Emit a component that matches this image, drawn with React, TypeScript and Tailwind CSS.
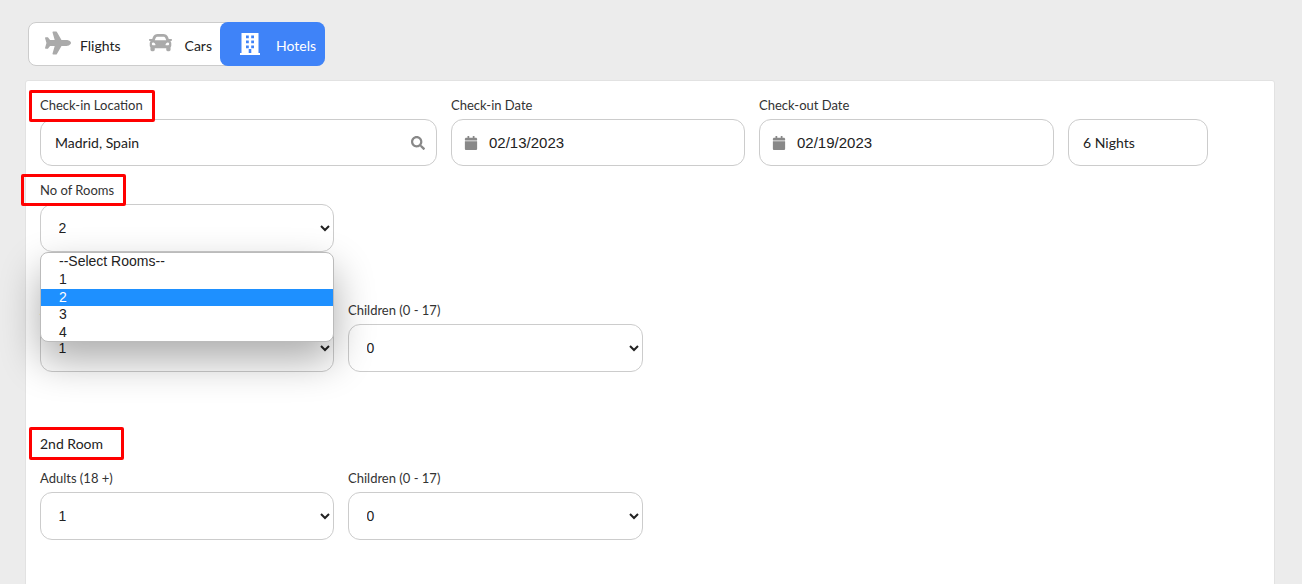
import { FaCalendar, FaCar, FaPlane, FaSearch } from "react-icons/fa";

const boxClass = "h-[47px] rounded-[12px] border border-[#ccc] bg-white flex items-center";

function Label({ children, lower }: { children: React.ReactNode; lower?: boolean }) {
  return (
    <p className={"text-[13px] leading-[19px] text-[#333] " + (lower ? "h-[24px] pt-[1px]" : "h-[23px]")}>{children}</p>
  );
}

function SelectField({ label, value, options, width }: { label: string; value: string; options: string[]; width: string }) {
  return (
    <div className={width}>
      <Label lower>{label}</Label>
      <select
        defaultValue={value}
        className="w-full h-[48px] rounded-[12px] border border-[#ccc] bg-white pl-[13.5px] pr-[4px] text-[14px] text-[#222] font-['Liberation_Sans',sans-serif]"
      >
        {options.map((o) => (
          <option key={o}>{o}</option>
        ))}
      </select>
    </div>
  );
}

function DateField({ label, value, width }: { label: string; value: string; width: string }) {
  return (
    <div className={width}>
      <Label>{label}</Label>
      <div className={boxClass + " pl-[12px] gap-[11px]"}>
        <FaCalendar size={14} className="text-[#888]" />
        <span className="pt-[2px] text-[15px] text-[#222] font-['Liberation_Sans',sans-serif]">{value}</span>
      </div>
    </div>
  );
}

function RoomRow() {
  return (
    <div className="flex gap-[14px]">
      <SelectField label="Adults (18 +)" value="1" options={["1", "2", "3", "4"]} width="w-[294px]" />
      <SelectField label="Children (0 - 17)" value="0" options={["0", "1", "2", "3"]} width="w-[295px]" />
    </div>
  );
}

function RedBox({ className }: { className: string }) {
  return <div className={"absolute border-[3px] border-[#f00] rounded-[2px] pointer-events-none " + className} />;
}

function HotelIcon() {
  return (
    <svg width="20" height="22" viewBox="0 0 20 22" fill="currentColor">
      <path
        fillRule="evenodd"
        d="M1.5 0h17v20h1.5v2H0v-2h1.5zM6 2.5v2.7h2.8V2.5zM11.2 2.5v2.7H14V2.5zM6 7.5v2.7h2.8V7.5zM11.2 7.5v2.7H14V7.5zM6 12.5v2.7h2.8v-2.7zM11.2 12.5v2.7H14v-2.7zM8.7 16v4h2.6v-4z"
      />
    </svg>
  );
}

const roomOptions = ["--Select Rooms--", "1", "2", "3", "4"];

export default function App() {
  return (
    <div className="h-[584px] overflow-hidden bg-[#ececec] font-['Lato',sans-serif]">
      <div className="pt-[22px] pl-[28px]">
        <div className="inline-flex h-[44px] rounded-[8px] border border-[#ccc] bg-white text-[14px] text-[#222]">
          <div className="flex items-center gap-[9px] pl-[16px] pr-[12px]">
            <FaPlane size={26} className="text-[#aaa] -mt-[3px]" />
            <span className="pt-[2px]">Flights</span>
          </div>
          <div className="flex items-center gap-[13px] pl-[16px] pr-[8px]">
            <FaCar size={23} className="text-[#aaa] -mt-[4px]" />
            <span className="pt-[2px]">Cars</span>
          </div>
          <div className="flex items-center gap-[16px] pl-[20px] pr-[9px] -my-px -mr-px rounded-[8px] bg-[#3f83f8] text-white">
            <HotelIcon />
            <span className="pt-[2px]">Hotels</span>
          </div>
        </div>
      </div>

      <div className="relative mt-[14px] ml-[25px] w-[1250px] h-[521px] rounded-[3px] border border-[#e2e2e2] bg-white pt-[15px] pl-[14px]">
        <div className="flex gap-[14px]">
          <div className="w-[397px]">
            <Label>Check-in Location</Label>
            <div className={boxClass + " justify-between pl-[14px] pr-[11px]"}>
              <span className="text-[14px] text-[#222]">Madrid, Spain</span>
              <FaSearch size={14} className="text-[#888]" />
            </div>
          </div>
          <DateField label="Check-in Date" value="02/13/2023" width="w-[294px]" />
          <DateField label="Check-out Date" value="02/19/2023" width="w-[295px]" />
          <div className="w-[140px] pt-[23px]">
            <div className={boxClass + " pl-[14px] text-[14px] text-[#222]"}>
              <span>6 Nights</span>
            </div>
          </div>
        </div>

        <div className="relative mt-[14px] w-[294px]">
          <SelectField label="No of Rooms" value="2" options={roomOptions} width="w-[294px]" />
          <div className="absolute z-10 top-[72px] left-0 right-0 h-[90px] rounded-[8px] border border-[#bbb] bg-white text-[14px] leading-[17.75px] text-[#222] font-['Liberation_Sans',sans-serif] shadow-[0_18px_40px_rgba(0,0,0,0.33)] overflow-hidden">
            {roomOptions.map((o) => (
              <div key={o} className={"h-[17.75px] pl-[18px] " + (o === "2" ? "bg-[#1e90ff] text-white" : "")}>
                {o}
              </div>
            ))}
          </div>
        </div>

        <p className="mt-[14px] h-[34px] pt-[1px] text-[14px] leading-[19px] text-[#222]">1st Room</p>
        <RoomRow />

        <p className="mt-[62px] h-[34px] text-[14px] leading-[19px] text-[#222]">2nd Room</p>
        <RoomRow />

        <RedBox className="left-[3px] top-[9px] w-[126px] h-[32px]" />
        <RedBox className="left-[-5px] top-[93px] w-[105px] h-[32px]" />
        <RedBox className="left-[3px] top-[346px] w-[95px] h-[33px]" />
      </div>
    </div>
  );
}
